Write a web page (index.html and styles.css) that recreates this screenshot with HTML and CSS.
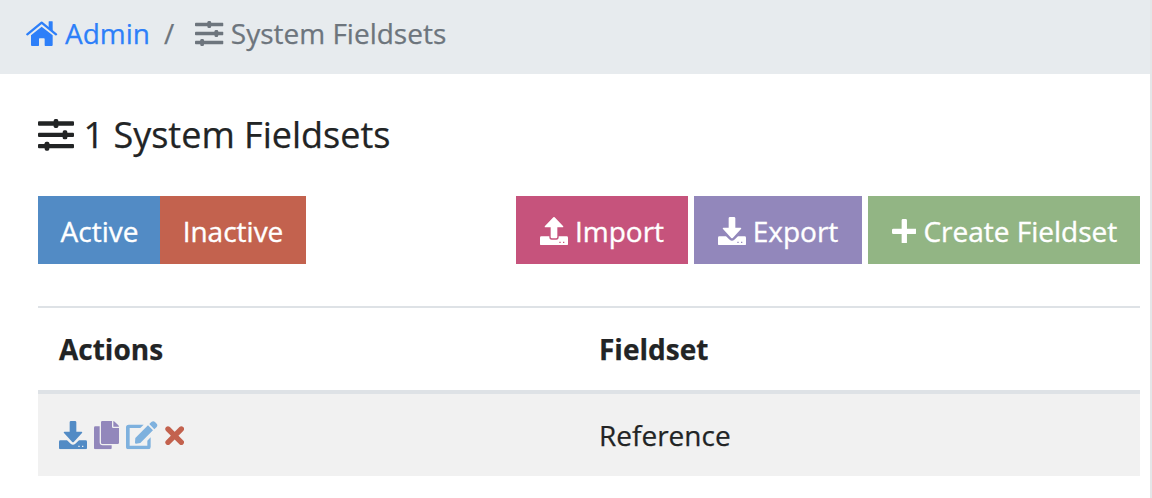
FILE: index.html
```html
<!DOCTYPE html>
<html lang="en">
<head>
<meta charset="utf-8">
<title>System Fieldsets</title>
<link rel="stylesheet" href="styles.css">
</head>
<body>
<svg class="sprite" aria-hidden="true">
  <symbol id="home" viewBox="0 0 96 76">
    <path d="M4 40 47 5 90 40" fill="none" stroke="currentColor" stroke-width="7" stroke-linecap="round" stroke-linejoin="round"/>
    <path d="M68 2q0-1 1-1h10q1 0 1 1v29L68 21z"/>
    <path d="M15 43 47 17 80 43v29q0 3-3 3H58q-2 0-2-2V54q0-2-2-2H41q-2 0-2 2v19q0 2-2 2H18q-3 0-3-3z"/>
  </symbol>
  <symbol id="sliders" viewBox="0 0 108 96">
    <rect x="0" y="7" width="108" height="13" rx="3"/>
    <rect x="0" y="41" width="108" height="13" rx="3"/>
    <rect x="0" y="75" width="108" height="13" rx="3"/>
    <rect x="47" y="0" width="14" height="27" rx="5"/>
    <rect x="74" y="34" width="14" height="27" rx="5"/>
    <rect x="20" y="68" width="14" height="27" rx="5"/>
  </symbol>
  <symbol id="upload" viewBox="0 0 84 85">
    <path fill-rule="evenodd" d="M4 58h24v2q0 8 7 8h14q7 0 7-8v-2h24q4 0 4 4v19q0 4-4 4H4q-4 0-4-4V62q0-4 4-4zM58 74v4h4v-4zM69 74v4h4v-4z"/>
    <path d="M40 1q2-2 4 0l25 26q3 4-2 4H52v29q0 4-4 4H36q-4 0-4-4V31H17q-5 0-2-4z"/>
  </symbol>
  <symbol id="download" viewBox="0 0 84 85">
    <path fill-rule="evenodd" d="M4 58h20l11 10q7 6 14 0l11-10h20q4 0 4 4v19q0 4-4 4H4q-4 0-4-4V62q0-4 4-4zM58 74v4h4v-4zM69 74v4h4v-4z"/>
    <path d="M36 0h12q4 0 4 4v28h15q5 0 2 4L45 62q-3 3-6 0L15 36q-3-4 2-4h15V4q0-4 4-4z"/>
  </symbol>
  <symbol id="plus" viewBox="0 0 74 74">
    <path d="M33 0h8q4 0 4 4v25h25q4 0 4 4v8q0 4-4 4H45v25q0 4-4 4h-8q-4 0-4-4V45H4q-4 0-4-4v-8q0-4 4-4h25V4q0-4 4-4z"/>
  </symbol>
  <symbol id="copy" viewBox="0 0 75 85">
    <path d="M4 16h13v48q0 9 9 9h27v8q0 4-4 4H4q-4 0-4-4V20q0-4 4-4z"/>
    <path d="M25 0h29v17q0 4 4 4h17v44q0 4-4 4H25q-4 0-4-4V4q0-4 4-4z"/>
    <path d="M58 0q2 0 4 2l11 11q2 2 2 4H58z"/>
  </symbol>
  <symbol id="edit" viewBox="0 0 95 85">
    <path d="M53 11 43 21H11v53h53V59l10-10v29q0 7-7 7H8q-8 0-8-7V19q0-8 8-8z"/>
    <path d="M66 13 81 28 43 66 30 68q-4 0-3-4l1-13z"/>
    <path d="m70 9 6-6q6-5 11 0l5 5q5 5 0 10l-7 7z"/>
  </symbol>
  <symbol id="times" viewBox="0 0 58 58">
    <path d="M9 9 49 49M49 9 9 49" fill="none" stroke="currentColor" stroke-width="16" stroke-linecap="round"/>
  </symbol>
</svg>
<div class="page">
  <nav class="breadcrumb">
    <a class="crumb-link" href="#"><svg class="icon icon-home"><use href="#home"/></svg><span>Admin</span></a>
    <span class="divider">/</span>
    <span class="crumb"><svg class="icon icon-sliders"><use href="#sliders"/></svg><span>System Fieldsets</span></span>
  </nav>
  <main class="content">
    <h1 class="title"><svg class="icon icon-title"><use href="#sliders"/></svg><span>1 System Fieldsets</span></h1>
    <div class="toolbar">
      <div class="filters">
        <button class="btn active">Active</button>
        <button class="btn inactive">Inactive</button>
      </div>
      <div class="tools">
        <button class="btn import"><svg class="icon icon-tray"><use href="#upload"/></svg>Import</button>
        <button class="btn export"><svg class="icon icon-tray"><use href="#download"/></svg>Export</button>
        <button class="btn create"><svg class="icon icon-plus"><use href="#plus"/></svg>Create Fieldset</button>
      </div>
    </div>
    <table class="table">
      <thead><tr><th class="col-actions">Actions</th><th>Fieldset</th></tr></thead>
      <tbody>
        <tr>
          <td>
            <div class="actions">
              <svg class="icon icon-tray blue"><use href="#download"/></svg>
              <svg class="icon icon-copy"><use href="#copy"/></svg>
              <svg class="icon icon-edit"><use href="#edit"/></svg>
              <svg class="icon icon-times"><use href="#times"/></svg>
            </div>
          </td>
          <td>Reference</td>
        </tr>
      </tbody>
    </table>
  </main>
</div>
</body>
</html>
```
FILE: styles.css
```css
* { box-sizing: border-box; }
body {
  margin: 0;
  background: #fff;
  color: #222425;
  font: 28px/42px "Open Sans", "Noto Sans", sans-serif;
  -webkit-text-stroke: 0.25px currentColor;
  overflow: hidden;
}
.sprite { display: none; }
.page { height: 498px; border-right: 2px solid #e4e6e8; }
.icon { display: block; flex: none; fill: currentColor; -webkit-text-stroke: 0; }
.breadcrumb {
  display: flex;
  height: 74px;
  padding: 12px 26px 20px;
  background: #e7ebee;
  color: #6d757d;
}
.crumb-link, .crumb { display: flex; align-items: center; }
.crumb-link { color: #2d7ff9; text-decoration: none; gap: 7px; }
.crumb { gap: 7px; }
.divider { padding: 0 21px 0 14px; }
.icon-home { width: 32px; height: 25.33px; margin-top: 1px; }
.icon-sliders { width: 28.5px; height: 25.33px; margin-top: 1px; }
.content { padding: 36px 10px 0 38px; }
.title {
  display: flex;
  align-items: center;
  gap: 9.5px;
  height: 50px;
  margin: 0 0 36px;
  font-size: 36px;
  font-weight: 400;
  line-height: 50px;
}
.icon-title { width: 36px; height: 32px; }
.toolbar { display: flex; justify-content: space-between; margin-bottom: 42px; }
.filters, .tools { display: flex; }
.tools { gap: 6px; }
.btn {
  display: flex;
  align-items: center;
  justify-content: center;
  gap: 7px;
  height: 68px;
  padding: 2px 0 0;
  border: 0;
  color: #fff;
  font: inherit;
  -webkit-text-stroke: 0.35px currentColor;
  white-space: nowrap;
}
.active { width: 122px; padding-left: 1px; background: #528bc5; }
.inactive { width: 146px; background: #c3624e; }
.import { width: 172px; background: #c6537c; }
.export { width: 168px; background: #9287bb; }
.create { width: 272px; padding-left: 1px; background: #92b584; }
.icon-tray { width: 28px; height: 28.33px; }
.icon-plus { width: 24.6px; height: 24.6px; }
.table {
  width: 100%;
  border-collapse: separate;
  border-spacing: 0;
  table-layout: fixed;
  text-align: left;
}
.table th { height: 88px; padding: 0 21px; border-top: 2px solid #dee2e6; border-bottom: 4px solid #dee2e6; }
.table td { height: 82px; padding: 0 21px; background: #f1f1f1; }
.col-actions { width: 540px; }
.actions { display: flex; align-items: center; padding-top: 1px; }
.blue { color: #528bc5; }
.icon-copy { width: 25px; height: 28.33px; margin-left: 7px; color: #9287bb; }
.icon-edit { width: 31.67px; height: 28.33px; margin-left: 7px; color: #7eb1de; }
.icon-times { width: 19.33px; height: 19.33px; margin-left: 7px; color: #c3624e; }
```
